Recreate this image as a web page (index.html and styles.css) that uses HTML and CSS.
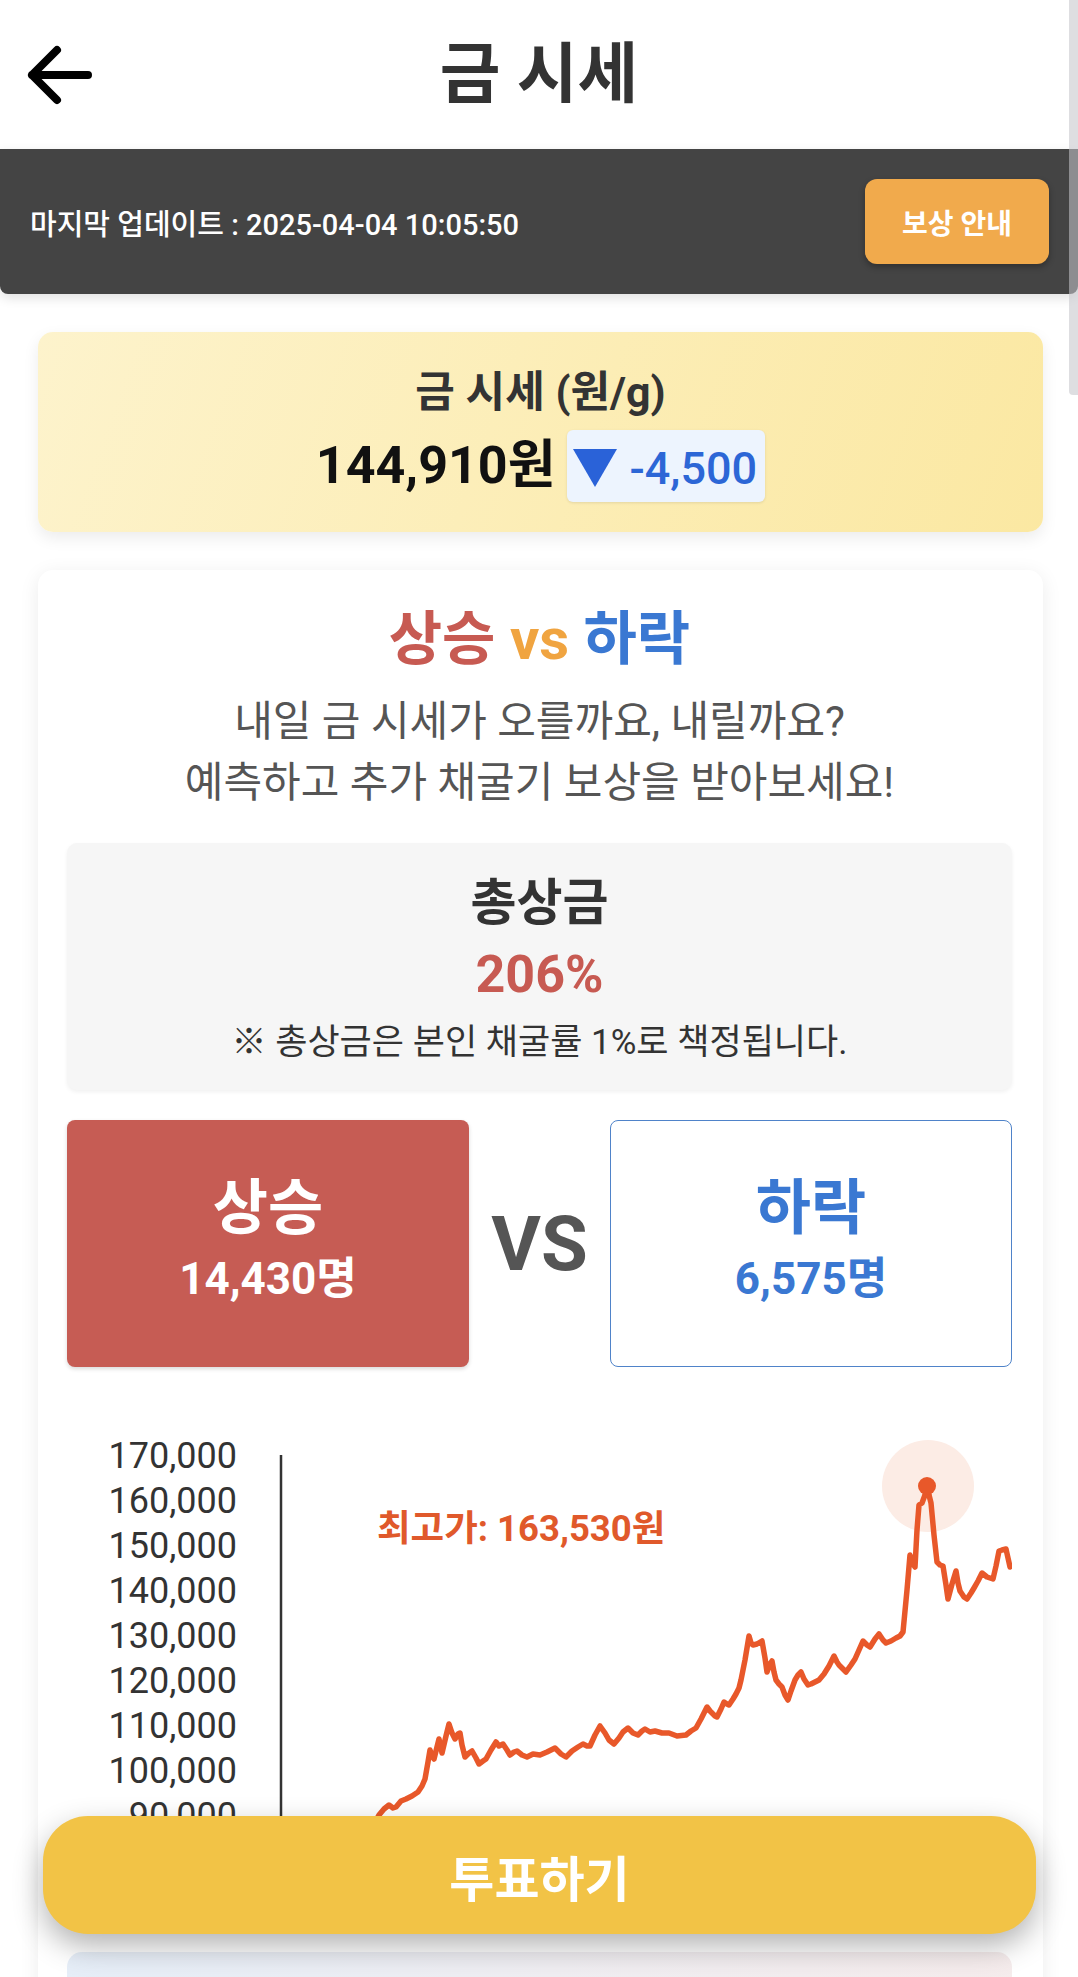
FILE: index.html
```html
<!DOCTYPE html>
<html lang="ko">
<head>
<meta charset="utf-8">
<title>금 시세</title>
<link rel="stylesheet" href="styles.css">
</head>
<body>
<header class="header">
  <div class="header-left">
    <svg class="back-icon" width="72" height="60" viewBox="0 0 72 60">
      <path d="M33 5 L8 30 L33 55 M8 30 L64 30" fill="none" stroke="#000" stroke-width="8" stroke-linecap="round" stroke-linejoin="round"/>
    </svg>
  </div>
  <h1 class="title">금 시세</h1>
  <div></div>
</header>

<div class="update-bar">
  <span class="update-text">마지막 업데이트 : 2025-04-04 10:05:50</span>
  <button class="reward-btn">보상 안내</button>
</div>

<main class="content">
  <section class="price-card">
    <div class="price-title">금 시세 (원/g)</div>
    <div class="price-row">
      <span class="price">144,910원</span>
      <span class="badge">
        <svg class="tri" width="44" height="38" viewBox="0 0 44 38"><polygon points="0,0 44,0 22,38" fill="#2a62d8"/></svg>
        <span class="badge-num">-4,500</span>
      </span>
    </div>
  </section>

  <section class="vote-card">
    <h2 class="vs-title"><span class="up">상승</span> <span class="vs">vs</span> <span class="down">하락</span></h2>
    <p class="subtitle">내일 금 시세가 오를까요, 내릴까요?<br>예측하고 추가 채굴기 보상을 받아보세요!</p>

    <div class="prize-box">
      <div class="prize-title">총상금</div>
      <div class="prize-value">206%</div>
      <div class="prize-note">※ 총상금은 본인 채굴률 1%로 책정됩니다.</div>
    </div>

    <div class="vote-row">
      <div class="choice choice-up">
        <div class="choice-label">상승</div>
        <div class="choice-count">14,430명</div>
      </div>
      <div class="vs-big">VS</div>
      <div class="choice choice-down">
        <div class="choice-label">하락</div>
        <div class="choice-count">6,575명</div>
      </div>
    </div>

    <svg class="chart" width="945" height="530" viewBox="0 0 945 530">
      <g class="axis-labels" font-size="36" fill="#333" text-anchor="end">
        <text x="170" y="68">170,000</text>
        <text x="170" y="113">160,000</text>
        <text x="170" y="158">150,000</text>
        <text x="170" y="203">140,000</text>
        <text x="170" y="248">130,000</text>
        <text x="170" y="293">120,000</text>
        <text x="170" y="338">110,000</text>
        <text x="170" y="383">100,000</text>
        <text x="170" y="428">90,000</text>
        <text x="170" y="473">80,000</text>
        <text x="170" y="518">70,000</text>
      </g>
      <line x1="214" y1="55" x2="214" y2="530" stroke="#333" stroke-width="2.5"/>
      <text class="max-label" x="310" y="141">최고가: 163,530원</text>
      <circle cx="861" cy="86" r="46" fill="#fcece5"/>
      <polyline fill="none" stroke="#e8582a" stroke-width="5.5" stroke-linejoin="round" stroke-linecap="round"
        points="273,490 293,450 312,415 317,409 322,405 326,408 329,407 334,401 339,399 345,396 351,392 355,386 358,379 361,362 363,350 365,356 367,359 370,347 372,339 374,348 375,353 379,336 382,324 385,333 388,339 391,334 393,333 395,345 398,357 402,353 405,351 409,358 412,364 416,361 419,359 424,350 429,342 432,346 436,344 440,350 443,355 447,352 450,351 455,355 460,357 466,354 473,355 480,352 488,348 494,354 499,357 505,351 511,347 516,344 520,346 523,346 528,335 533,326 538,333 542,340 547,344 552,338 556,332 561,328 566,333 571,335 575,331 578,329 583,332 588,331 595,333 602,333 610,336 619,335 624,331 629,328 634,319 640,307 643,311 645,313 648,316 650,317 654,309 657,302 660,304 662,305 666,299 669,294 672,288 674,280 678,260 682,236 684,243 686,245 690,244 695,241 698,258 700,272 703,264 705,261 707,272 709,280 712,284 715,287 718,295 721,300 724,291 728,280 731,275 734,272 737,279 741,285 744,284 746,283 752,280 757,274 762,266 767,256 770,262 772,265 776,269 779,272 784,265 788,259 792,250 796,241 800,245 803,247 808,239 812,234 816,240 819,243 824,241 829,238 833,236 836,232 840,190 843,155 846,164 848,167 850,130 852,105 855,103 858,95 860,86 862,95 864,103 867,135 870,162 873,165 876,166 879,185 881,199 885,184 889,171 891,183 893,191 897,197 900,199 904,193 907,188 911,181 915,173 920,177 926,179 929,166 932,151 935,150 939,149 941,158 943,167"/>
      <circle cx="860" cy="86" r="9" fill="#e8582a"/>
    </svg>

    <div class="info-box"></div>
  </section>
</main>

<button class="vote-btn">투표하기</button>
<div class="scroll-thumb"></div>
</body>
</html>
```

FILE: styles.css
```css
html, body {
  margin: 0;
  padding: 0;
  height: 1977px;
  overflow: hidden;
  background: #ffffff;
}

body {
  font-family: Roboto, "Noto Sans CJK KR", sans-serif;
  color: #333;
}

.header {
  height: 149px;
  display: grid;
  grid-template-columns: 1fr auto 1fr;
  align-items: center;
}

.header-left {
  display: flex;
  align-items: center;
}

.back-icon {
  display: block;
  margin-left: 24px;
}

.title {
  margin: 0;
  font-size: 66px;
  font-weight: 700;
  color: #333;
  line-height: 1;
}

.update-bar {
  height: 145px;
  box-sizing: border-box;
  background: #444444;
  border-radius: 0 0 8px 8px;
  box-shadow: 0 4px 12px rgba(0, 0, 0, 0.12);
  display: flex;
  align-items: center;
  justify-content: space-between;
  padding: 0 29px 0 30px;
}

.update-text {
  color: #fff;
  font-size: 29px;
  font-weight: 500;
}

.reward-btn {
  width: 184px;
  height: 85px;
  border: none;
  border-radius: 12px;
  background: #f1aa4c;
  color: #fff;
  font-family: Roboto, "Noto Sans CJK KR", sans-serif;
  font-size: 28px;
  font-weight: 700;
  box-shadow: 0 3px 6px rgba(0, 0, 0, 0.3);
  padding: 0;
}

.content {
  padding: 38px 35px 0 38px;
}

.price-card {
  border-radius: 15px;
  background: linear-gradient(110deg, #fdf3cc 0%, #fbe8a2 100%);
  box-shadow: 0 6px 16px rgba(0, 0, 0, 0.08);
  padding: 30px 0;
  text-align: center;
}

.price-title {
  font-size: 43px;
  font-weight: 700;
  line-height: 60px;
  color: #333;
}

.price-row {
  margin-top: 8px;
  display: flex;
  justify-content: center;
  align-items: center;
  gap: 12px;
}

.price {
  font-size: 52px;
  font-weight: 700;
  color: #111;
  line-height: 72px;
}

.badge {
  height: 72px;
  box-sizing: border-box;
  display: flex;
  align-items: center;
  gap: 12px;
  padding: 4px 8px 0 6px;
  background: #edf4fe;
  border-radius: 6px;
  box-shadow: 0 1px 3px rgba(0, 0, 0, 0.1);
}

.tri {
  display: block;
}

.badge-num {
  font-size: 45px;
  font-weight: 500;
  color: #2c66d6;
  line-height: 1;
}

.vote-card {
  margin-top: 38px;
  background: #fff;
  border-radius: 15px;
  box-shadow: 0 4px 20px rgba(0, 0, 0, 0.08);
  padding: 36px 31px 0 29px;
  text-align: center;
  height: 1500px;
}

.vs-title {
  margin: 0;
  font-size: 58px;
  font-weight: 700;
  line-height: 67px;
}

.up { color: #c75a52; }
.vs { color: #f0a440; }
.down { color: #3a78d2; }

.subtitle {
  margin: 18px 0 0;
  font-size: 42px;
  line-height: 61px;
  color: #555;
}

.prize-box {
  margin-top: 30px;
  background: #f6f6f6;
  border-radius: 10px;
  box-shadow: 0 2px 4px rgba(0, 0, 0, 0.06);
  padding: 31px 0 25px;
}

.prize-title {
  font-size: 50px;
  font-weight: 700;
  line-height: 58px;
  color: #333;
}

.prize-value {
  margin-top: 13px;
  font-size: 52px;
  font-weight: 700;
  line-height: 60px;
  color: #c75a52;
}

.prize-note {
  margin-top: 16px;
  font-size: 35px;
  line-height: 44px;
  color: #333;
}

.vote-row {
  margin-top: 30px;
  height: 247px;
  display: grid;
  grid-template-columns: 402px 141px 402px;
  align-items: stretch;
}

.choice {
  border-radius: 8px;
  box-sizing: border-box;
  display: flex;
  flex-direction: column;
  justify-content: center;
  align-items: center;
  gap: 10px;
}

.choice-up {
  background: #c65c54;
  color: #fff;
  box-shadow: 0 2px 4px rgba(0, 0, 0, 0.15);
}

.choice-down {
  background: #fff;
  border: 1.5px solid #4f83c9;
  color: #3a78d2;
}

.choice-label {
  font-size: 60px;
  font-weight: 700;
  line-height: 60px;
}

.choice-count {
  font-size: 44px;
  font-weight: 700;
  line-height: 60px;
}

.vs-big {
  align-self: center;
  font-size: 76px;
  font-weight: 700;
  color: #555;
  line-height: 1;
}

.chart {
  display: block;
  margin-top: 33px;
  font-family: Roboto, "Noto Sans CJK KR", sans-serif;
}

.max-label {
  font-size: 36.5px;
  font-weight: 700;
  fill: #e0592b;
}

.info-box {
  margin-top: 22px;
  height: 200px;
  border-radius: 15px;
  background: linear-gradient(100deg, #e6eef8 0%, #f0eef2 50%, #f6ecec 100%);
}

.vote-btn {
  position: fixed;
  left: 43px;
  bottom: 43px;
  width: 993px;
  height: 118px;
  border: none;
  border-radius: 45px;
  background: #f2c346;
  color: #fff;
  font-family: Roboto, "Noto Sans CJK KR", sans-serif;
  font-size: 49px;
  font-weight: 700;
  box-shadow: 0 12px 30px rgba(0, 0, 0, 0.3);
  padding: 0;
}

.scroll-thumb {
  position: fixed;
  top: 0;
  right: 0;
  width: 9px;
  height: 395px;
  background: rgba(197, 197, 202, 0.57);
  border-radius: 0 0 0 4px;
}
```
